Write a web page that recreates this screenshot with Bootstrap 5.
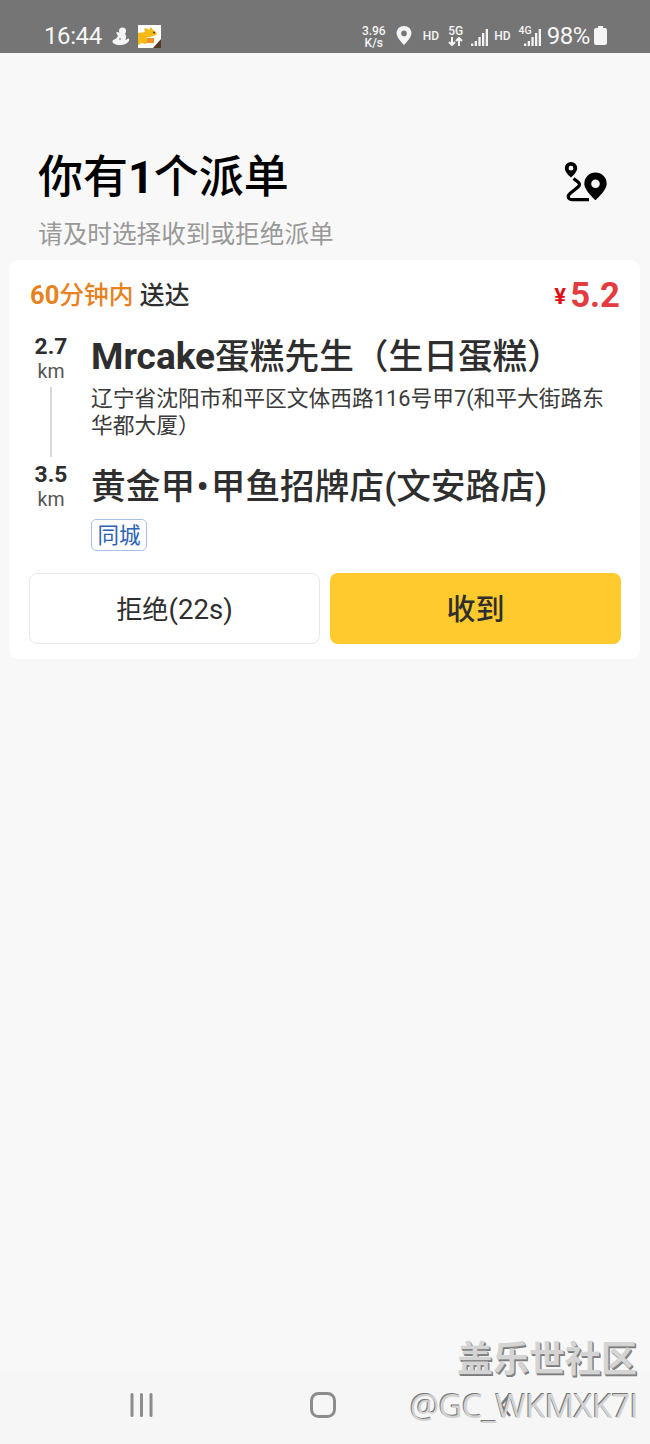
<!DOCTYPE html>
<html lang="zh-CN">
<head>
<meta charset="utf-8">
<meta name="viewport" content="width=device-width, initial-scale=1">
<title>派单</title>
<link href="https://cdn.jsdelivr.net/npm/bootstrap@5.3.0/dist/css/bootstrap.min.css" rel="stylesheet">
<style>
body{background:#f8f8f8;font-family:Roboto,"Noto Sans CJK SC",sans-serif;color:#2e2e2e;height:1444px;overflow:hidden}
svg{display:block;flex:none}
.status-strip{height:53px;background:#757575;color:#f5f5f5;padding:19px 43px 0 44px}
.clock{font-size:24px;line-height:34px;letter-spacing:-.4px}
.speed{font-size:12px;line-height:12px;width:28px;font-weight:500}
.hd{font-size:12px;line-height:34px;font-weight:500}
.tiny-net{font-size:12px;line-height:11px;font-weight:500}
.page-head{height:207px;padding:98px 42px 0 38px}
.page-head h1{font-size:45px;line-height:54px;font-weight:500;color:#000}
.page-head h1 b{font-weight:700}
.hint{font-size:24.65px;line-height:34px;margin-top:13px;color:#999}
.route-icon{margin-top:11px}
.order{margin:0 10px 0 9px;height:399px;border-radius:9px;background:#fff;padding:17px 19px 0 20px}
.due{font-size:24.8px;line-height:36px;font-weight:500;padding-left:1px}
.due span{color:#e7821f}
.due b{font-weight:700;font-size:25.5px}
.price{font-size:34.7px;line-height:36px;font-weight:700;color:#e43b40;margin-right:1px}
.price small{font-size:22px;color:#e00d14;margin-right:4px;vertical-align:3px}
.dist-col{width:44px;margin:0 18px 0 0}
.dist{font-size:22.8px;line-height:26px;font-weight:700}
.unit{font-size:19.5px;line-height:24px;color:#555}
.route-line{width:2px;height:70px;background:#d8d8d8;margin:3px 0 5px}
.shop{font-size:34.7px;line-height:46px;font-weight:500;white-space:nowrap}
.shop b{font-weight:700;font-size:37px;line-height:1}
.shop i{font-style:normal;padding:0 2px 0 1.5px}
.addr{font-size:21.75px;line-height:27px;color:#3b3b3b;white-space:nowrap}
.city-tag{font-size:21.5px;line-height:31px;border:1.5px solid #a9c1e6;border-radius:5px;color:#2b62b5;width:56px;height:32px}
.order .btn{height:71px;border-radius:8px;flex:1;padding:0;color:#2e2e2e}
.order .btn-refuse{border:1.5px solid #e8e8e8;font-size:26.2px;padding-top:2px}
.btn-refuse span{font-size:27.6px}
.order .btn-accept,.order .btn-accept:hover{background:#ffca2e;font-size:29px;font-weight:500;padding-top:4px}
.sysnav{height:72px;background:#f6f6f6;padding:20px 138px 0 130px}
.stamp{right:13px;bottom:15px;text-align:right;white-space:nowrap}
.stamp-a{font-size:36px;line-height:46px;font-weight:700;color:#d4d4d4;text-shadow:1px 1px 0 #888,1.5px 2px 0 #7b7b7b}
.stamp-b{font-family:"Open Sans",sans-serif;font-size:33px;line-height:46px;color:#d2d2d2;text-shadow:-1px -1px 0 #777;font-weight:400;letter-spacing:-.75px;margin-right:-1px}
</style>
</head>
<body class="d-flex flex-column position-relative">
<header class="status-strip d-flex align-items-start">
  <span class="clock">16:44</span>
  <svg style="margin:8px 0 0 10px" width="18" height="19" viewBox="0 0 18 19" fill="#f5f5f5"><circle cx="10.500" cy="4" r="3.500"/><path d="M4 5.500l2-.5 3 2 3-.5c2 1 2.500 2.500 2 4.500l-.5 2c1 .5 1.500-1.500 3-1.500 1.500.5.5 3.500-1.500 4.500-2 1.500-4 2-7 2-5 0-8-2-7.500-4 .5-1.500 2.500-1.500 4-3L6 9z"/><circle cx="8" cy="12" r="1" fill="#999"/></svg>
  <svg style="margin:6px 0 0 8px" width="23" height="23" viewBox="0 0 23 23"><path fill="#fff" d="M0 0h23v23H0z"/><path fill="#f9b914" d="M0 8l7-1-1-3 2-1 3 2 2-3 2 3 4 3-1 2-6 2H9l-1 7-5-1-2 2H0z"/><path fill="#f2941b" d="M9 13h7v5H8z"/><path fill="#503c22" d="M23 14v9h-8z"/><circle cx="16" cy="7.500" r="1" fill="#333"/></svg>
  <div class="d-flex ms-auto align-items-start">
    <div class="speed text-center" style="margin-top:6px"><div>3.96</div><div>K/s</div></div>
    <svg style="margin:7px 0 0 8px" width="16" height="20" viewBox="0 0 16 20"><path fill="#f5f5f5" fill-rule="evenodd" d="M8 0C3.600 0 .5 3.200.5 7.300.5 12 8 19 8 19s7.500-7 7.500-11.700C15.500 3.200 12.400 0 8 0zm0 4.600a2.800 2.800 0 110 5.600 2.800 2.800 0 010-5.600z"/></svg>
    <span class="hd" style="margin-left:11px">HD</span>
    <div class="tiny-net" style="margin:7px 0 0 9px">5G<svg width="15" height="9" viewBox="0 0 15 9" fill="none" stroke="#f5f5f5" stroke-width="2"><path d="M4 0v8M1 5l3 3 3-3M11 9V1M8 4l3-3 3 3"/></svg></div>
    <svg style="margin:10px 0 0 8px" width="17" height="17" viewBox="0 0 17 17" fill="#f5f5f5"><path d="M0 14.500h2.300V17H0zM3.700 12H6v5H3.700zM7.400 8h2.300v9H7.400zM11 4h2.300v13H11zM14.700 0H17v17h-2.300z"/></svg>
    <span class="hd" style="margin-left:6px">HD</span>
    <div class="tiny-net" style="margin:6px -10px 0 8px;font-size:10.500px">4G</div>
    <svg style="margin:10px 0 0 2px" width="17" height="17" viewBox="0 0 17 17" fill="#f5f5f5"><path d="M0 14.500h2.300V17H0zM3.700 12H6v5H3.700zM7.400 8h2.300v9H7.400zM11 4h2.300v13H11zM14.700 0H17v17h-2.300z"/></svg>
    <span class="clock" style="margin-left:6px">98%</span>
    <svg style="margin:7px 0 0 4px" width="13" height="20" viewBox="0 0 13 20"><path fill="#f5f5f5" d="M4 0h5v2h2q2 0 2 2v13q0 2-2 2H2q-2 0-2-2V4q0-2 2-2h2z"/></svg>
  </div>
</header>
<section class="page-head d-flex justify-content-between">
  <div><h1 class="mb-0">你有<b>1</b>个派单</h1><div class="hint">请及时选择收到或拒绝派单</div></div>
  <svg class="route-icon" width="44" height="40" viewBox="0 0 44 40"><g fill-rule="evenodd"><path d="M7 0a6.200 6.200 0 00-6.200 6.300C.8 10.500 7 15.500 7 15.500s6.200-5 6.200-9.200A6.200 6.200 0 007 0zm0 3.800a2.400 2.400 0 110 4.800 2.400 2.400 0 010-4.800z"/><path d="M31.500 10.500A11.200 11.200 0 0020.300 21.700C20.300 28.500 31.500 38 31.500 38s11.200-9.500 11.200-16.300A11.200 11.200 0 0031.500 10.500zm0 7a4.300 4.300 0 110 8.600 4.300 4.300 0 010-8.600z"/></g><path d="M9.500 16.500l4.500 3.500q3 2.500 0 5l-8 6.500q-2.500 2-1.500 4.500 1 1.700 3.500 1.700h17" fill="none" stroke="#000" stroke-width="3.200"/></svg>
</section>
<main class="order">
  <div class="d-flex justify-content-between">
    <div class="due"><span><b>60</b>分钟内</span> 送达</div>
    <div class="price"><small>¥</small>5.2</div>
  </div>
  <div class="d-flex" style="margin-top:19px">
    <div class="dist-col d-flex flex-column align-items-center">
      <div class="dist">2.7</div><div class="unit">km</div><div class="route-line"></div><div class="dist">3.5</div><div class="unit">km</div>
    </div>
    <div>
      <div class="shop"><b>Mrcake</b>蛋糕先生（生日蛋糕）</div>
      <div class="addr" style="margin-top:5px">辽宁省沈阳市和平区文体西路116号甲7(和平大街路东<br>华都大厦）</div>
      <div class="shop" style="margin-top:25px">黄金甲<i>•</i>甲鱼招牌店(文安路店)</div>
      <div class="city-tag text-center" style="margin-top:9px">同城</div>
    </div>
  </div>
  <div class="d-flex" style="gap:10px;margin-top:22px">
    <button class="btn btn-refuse">拒绝<span>(22s)</span></button><button class="btn btn-accept">收到</button>
  </div>
</main>
<nav class="sysnav d-flex justify-content-between mt-auto">
  <svg width="24" height="26" viewBox="0 0 24 26" stroke="#8c8c8c" stroke-width="3" stroke-linecap="round"><path d="M2 2.500v21M11.500 2.500v21M21 2.500v21"/></svg>
  <svg style="margin-left:-8px" width="26" height="26" viewBox="0 0 26 26" fill="none" stroke="#8c8c8c" stroke-width="3"><rect x="1.500" y="1.500" width="23" height="23" rx="7"/></svg>
  <svg width="13" height="26" viewBox="0 0 13 26" fill="none" stroke="#777" stroke-width="2.500"><path d="M11 2L2 13l9 11"/></svg>
</nav>
<div class="stamp position-absolute"><div class="stamp-a">盖乐世社区</div><div class="stamp-b">@GC_WKMXK7I</div></div>
<script src="https://cdn.jsdelivr.net/npm/bootstrap@5.3.0/dist/js/bootstrap.bundle.min.js"></script>
</body>
</html>
